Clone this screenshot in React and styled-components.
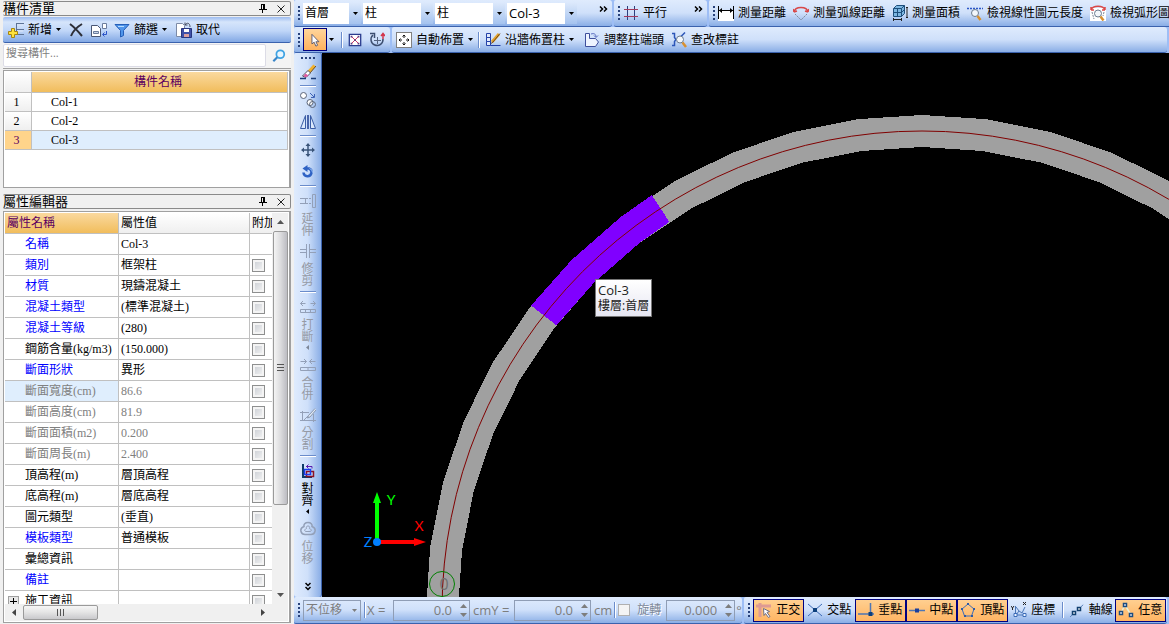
import React from 'react';
import styled, { createGlobalStyle, css } from 'styled-components';

const GlobalStyle = createGlobalStyle`
  *, *::before, *::after {
    box-sizing: border-box;
  }

  body {
    margin: 0;
    background-color: #f0f0f0;
    font-family: 'Open Sans', 'Noto Sans CJK TC', sans-serif;
    font-size: 12px;
    line-height: 16px;
    color: #000;
  }

  button, input, select {
    margin: 0;
    padding: 0;
    border: 0;
    background: none;
    border-radius: 0;
    font: inherit;
    color: inherit;
  }

  svg {
    display: block;
    flex: none;
  }
`;

const bar = 'linear-gradient(#dfebfd, #cfe0fa 50%, #8aaee6)';
const serif = "'Liberation Serif', 'Noto Sans CJK TC', serif";

const Shell = styled.div`
  display: flex;
  height: 100vh;
  overflow: hidden;
  white-space: nowrap;
`;

/* ---------- side panels ---------- */

const Sidebar = styled.aside`
  flex: none;
  width: 294px;
  padding: 1px 3px 1px 3px;
  display: flex;
  flex-direction: column;
  gap: 6px;
`;

const Panel = styled.section`
  width: 288px;
  display: flex;
  flex-direction: column;
  min-height: 0;
  flex: ${({ $grow }) => ($grow ? '1' : 'none')};
`;

const PanelTitle = styled.header`
  display: flex;
  align-items: center;
  height: 15px;
  border: 1px solid #8a8a8a;
  border-left: 0;
  border-radius: 2px;
  margin-bottom: 1px;
`;

const PanelName = styled.h2`
  flex: 1;
  margin: 0;
  font-size: 13px;
  font-weight: 400;
  line-height: 13px;
`;

const TitleButton = styled.button`
  width: 18px;
  height: 13px;
  display: flex;
  align-items: center;
  justify-content: center;
`;

const PanelToolbar = styled.div`
  display: flex;
  align-items: center;
  height: 26px;
  padding-left: 5px;
  border-bottom: 1px solid #3b62ad;
  border-radius: 2px;
  background: linear-gradient(#9dbcf0, #d6e5fb 20%, #c0d6f8 55%, #82a8e4);
`;

const PanelTool = styled.button`
  display: flex;
  align-items: center;
  gap: 4px;
  height: 22px;
  margin-right: ${({ $space }) => $space || 7}px;
`;

const SearchRow = styled.div`
  display: flex;
  align-items: center;
  height: 26px;
  background: #f4f4f4;
  border-bottom: 1px solid #a0a0a0;
`;

const SearchInput = styled.input`
  flex: 1;
  height: 23px;
  padding: 0 2px 7px;
  border: 1px solid #dcdce6;
  border-radius: 2px;
  background: #fff;
  font-size: 11px;

  &::placeholder {
    color: #808080;
    opacity: 1;
  }
`;

const SearchButton = styled.button`
  width: 25px;
  display: flex;
  justify-content: center;
`;

const Frame = styled.div`
  display: flex;
  flex-direction: column;
  flex: ${({ $grow }) => ($grow ? '1' : 'none')};
  min-height: ${({ $min }) => ($min ? `${$min}px` : '0')};
  border: 1px solid #a0a0a0;
  border-right-width: 2px;
  padding: 1px;
  margin-top: 1px;
  background: #fff;
  overflow: hidden;
`;

const ListTable = styled.table`
  width: 100%;
  table-layout: fixed;
  border-collapse: separate;
  border-spacing: 0;
  font-family: ${serif};
  font-size: 12px;
  line-height: 16px;
`;

const gold = 'linear-gradient(#fad99f, #f1bd5c)';
const silver = 'linear-gradient(#ffffff, #efefef)';

const ListHead = styled.th`
  height: 21px;
  padding: 0 3px 0 0;
  font-weight: 400;
  color: #5c0060;
  border-right: 1px solid #c0c0c0;
  border-bottom: 1px solid #c0c0c0;
  background: ${({ $gold }) => ($gold ? gold : silver)};
`;

const IndexCell = styled.th`
  height: 19px;
  padding: 0 3px 0 0;
  font-weight: 400;
  color: ${({ $active }) => ($active ? '#5c0060' : '#000')};
  background: ${({ $active }) => ($active ? '#ffd48b' : silver)};
  border-right: 1px solid #c0c0c0;
  border-bottom: 1px solid #c0c0c0;
`;

const NameCell = styled.td`
  padding: 0 0 0 19px;
  background: ${({ $active }) => ($active ? '#dfeefd' : '#fff')};
  border-right: 1px solid #c0c0c0;
  border-bottom: 1px solid #c0c0c0;
`;

const PropBody = styled.div`
  display: flex;
  flex: 1;
  min-height: 0;
`;

const PropScroll = styled.div`
  flex: 1;
  overflow: hidden;
`;

const PropTable = styled(ListTable)``;

const PropHead = styled.th`
  height: 21px;
  padding: 0 0 0 2px;
  text-align: left;
  font-weight: 400;
  overflow: hidden;
  color: ${({ $gold }) => ($gold ? '#5c0060' : '#000')};
  background: ${({ $gold }) => ($gold ? gold : silver)};
  border-right: 1px solid #c0c0c0;
  border-bottom: 1px solid #c0c0c0;

  &:last-child {
    border-right: 0;
  }
`;

const toneColor = { key: '#0000ff', plain: '#000', off: '#808080' };

const PropName = styled.th`
  height: 21px;
  padding: 0 0 0 ${({ $group }) => ($group ? 3 : 20)}px;
  text-align: left;
  font-weight: 400;
  color: ${({ $tone }) => toneColor[$tone]};
  background: ${({ $active }) => ($active ? '#dfeefd' : '#fff')};
  border-right: 1px solid #c0c0c0;
  border-bottom: 1px solid #c0c0c0;
`;

const PropValue = styled.td`
  padding: 0 0 0 2px;
  color: ${({ $tone }) => ($tone === 'off' ? '#808080' : '#000')};
  border-right: 1px solid #c0c0c0;
  border-bottom: 1px solid #c0c0c0;
`;

const PropCheck = styled.td`
  padding: 0 0 0 2px;
  border-bottom: 1px solid #c0c0c0;
`;

const GroupLabel = styled.span`
  display: flex;
  align-items: center;
  gap: 6px;
`;

const Expander = styled.button`
  width: 11px;
  height: 11px;
  display: flex;
  align-items: center;
  justify-content: center;
  border: 1px solid #a0a0a0;
  background: #e8e8e8;
`;

const CheckBox = styled.input.attrs({ type: 'checkbox' })`
  appearance: none;
  flex: none;
  display: block;
  width: ${({ $small }) => ($small ? 12 : 13)}px;
  height: ${({ $small }) => ($small ? 12 : 13)}px;
  border: 1px solid ${({ $small }) => ($small ? '#b0b0b0' : '#8e8f8f')};
  background: ${({ $small }) => ($small ? '#f4f4f4' : 'linear-gradient(135deg, #c8ccd2, #f6f6f6)')};
  box-shadow: inset 0 0 0 ${({ $small }) => ($small ? 1 : 2)}px #f4f4f4;
`;

const VScroll = styled.div`
  flex: none;
  width: 16px;
  display: flex;
  flex-direction: column;
  align-items: center;
  background: #f0f0f0;
`;

const HScroll = styled.div`
  flex: none;
  height: 17px;
  margin-right: 16px;
  display: flex;
  align-items: center;
  background: #f0f0f0;
`;

const ScrollRow = styled.div`
  background: #f0f0f0;
`;

const ScrollButton = styled.button`
  flex: none;
  width: 18px;
  height: 18px;
  display: flex;
  align-items: center;
  justify-content: center;
`;

const Thumb = styled.div`
  display: flex;
  align-items: center;
  justify-content: center;
  border: 1px solid #9a9a9a;
  border-radius: 2px;
  ${({ $across }) =>
    $across
      ? css`
          width: 75px;
          height: 15px;
          background: linear-gradient(#f6f6f6, #e6e6e6 45%, #c9c9cc);
        `
      : css`
          width: 15px;
          flex: 0 1 274px;
          background: linear-gradient(90deg, #f4f4f4, #dcdcde 50%, #bcbcc2);
        `}
`;

const Spacer = styled.div`
  flex: 1;
`;

/* ---------- toolbars ---------- */

const Main = styled.main`
  flex: 1;
  min-width: 0;
  display: flex;
  flex-direction: column;
  background: #9ebef5;
`;

const BarRow = styled.div`
  flex: none;
  display: flex;
  height: ${({ $height }) => $height}px;
  overflow: hidden;
`;

const Band = styled.div`
  display: flex;
  align-items: center;
  flex: ${({ $basis }) => ($basis ? `0 0 ${$basis}px` : '1 0 auto')};
  padding-left: 4px;
  margin-right: 2px;
  border-bottom: 1px solid #3b62ad;
  border-radius: 2px 3px 3px 2px;
  background: ${bar};
`;

const Grip = styled.span`
  flex: none;
  width: 2px;
  height: 14px;
  margin-right: 3px;
  background: repeating-linear-gradient(#27417a 0 2px, transparent 2px 4px);
`;

const Divider = styled.span`
  flex: none;
  width: 2px;
  height: 16px;
  margin: 0 ${({ $space }) => $space || 5}px;
  background: linear-gradient(90deg, #6a8ccb 50%, #fff 50%);
`;

const Tool = styled.button`
  flex: none;
  display: flex;
  align-items: center;
  justify-content: center;
  gap: 4px;
  height: 23px;
  margin-right: ${({ $space }) => $space || 0}px;
  padding: 0 ${({ $pad }) => $pad || 0}px;
`;

const SnapTool = styled(Tool)`
  width: 51px;
  border: 1px solid transparent;
  ${({ $on }) =>
    $on &&
    css`
      border-color: #000080;
      background: linear-gradient(#ffcf90, #ffb563);
    `}
`;

const PickTool = styled(Tool)`
  width: 24px;
  border: 1px solid #000080;
  background: linear-gradient(#ffd59b, #ffb25e);
`;

const More = styled.button`
  height: 18px;
  margin: 0 4px 8px auto;
`;

const ComboBox = styled.span`
  flex: none;
  display: grid;
  width: ${({ $width }) => $width}px;
  height: 21px;
  margin-right: 2px;
  background: ${({ $off }) => ($off ? 'transparent' : '#fff')};
  border: ${({ $off }) => ($off ? '1px solid #8f9db5' : '0')};
  color: ${({ $off }) => ($off ? '#7d7d7d' : '#000')};
`;

const ComboSelect = styled.select`
  grid-area: 1 / 1;
  appearance: none;
  padding: 0 14px 0 2px;
  font-size: ${({ $size }) => $size || 12}px;
  line-height: 18px;
  opacity: 1;
`;

const ComboArrow = styled.span`
  grid-area: 1 / 1;
  justify-self: end;
  width: 12px;
  display: flex;
  align-items: center;
  justify-content: center;
  pointer-events: none;
  background: ${({ $off }) => ($off ? 'none' : 'linear-gradient(#dbe8fb, #a5c3ef)')};
`;

const Work = styled.div`
  flex: 1;
  min-height: 0;
  display: flex;
`;

const SideBar = styled.div`
  flex: none;
  width: 28px;
  display: flex;
  flex-direction: column;
  align-items: center;
  border-right: 1px solid #3b62ad;
  border-radius: 2px 2px 3px 3px;
  background: linear-gradient(90deg, #dfebfd, #cfe0fa 50%, #8aaee6);
`;

const SideGrip = styled.span`
  flex: none;
  width: 14px;
  height: 2px;
  margin: 4px 0 2px;
  background: repeating-linear-gradient(90deg, #27417a 0 2px, transparent 2px 4px);
`;

const SideDivider = styled.span`
  flex: none;
  width: 16px;
  height: 2px;
  margin: 2px 0;
  background: linear-gradient(#6a8ccb 50%, #fff 50%);
`;

const SideIcon = styled.button`
  flex: none;
  height: 22px;
  display: flex;
  align-items: center;
`;

const SideTool = styled.button`
  flex: none;
  height: ${({ $menu }) => ($menu ? 58 : 50)}px;
  display: flex;
  flex-direction: column;
  align-items: center;
  color: ${({ disabled }) => (disabled ? '#959aa5' : '#000')};
`;

const SideGlyph = styled.span`
  height: 24px;
  display: flex;
  align-items: center;
`;

const SideLabel = styled.span`
  width: 12px;
  line-height: 12px;
  white-space: normal;
  word-break: break-all;
`;

const SideMenuMark = styled.span`
  height: 8px;
  display: flex;
  align-items: center;
`;

/* ---------- drawing area ---------- */

const Canvas = styled.div`
  position: relative;
  flex: 1;
  min-width: 0;
  background: #000;
  overflow: hidden;
`;

const Scene = styled.svg`
  width: 100%;
  height: 100%;
`;

const Tip = styled.div`
  position: absolute;
  left: 273px;
  top: 226px;
  padding: 2px;
  border: 1px solid #767676;
  background: linear-gradient(#fff, #e6e6f2);
  color: #222;
`;

const TipName = styled.div`
  font-size: 13px;
`;

/* ---------- status bar ---------- */

const Field = styled.label`
  flex: none;
  display: flex;
  align-items: center;
  font-size: 13px;
  color: #7d7d7d;
`;

const FieldText = styled.span`
  width: ${({ $width }) => $width}px;
`;

const SpinBox = styled.span`
  display: flex;
  width: ${({ $width }) => $width}px;
  height: 21px;
  margin-right: ${({ $tight }) => ($tight ? 1 : 3)}px;
  border: 1px solid #8f9db5;
`;

const SpinInput = styled.input`
  flex: 1;
  min-width: 0;
  padding-right: 5px;
  text-align: right;
  color: #7d7d7d;
`;

const SpinArrows = styled.span`
  width: 12px;
  display: flex;
  flex-direction: column;
  align-items: center;
  justify-content: space-between;
  padding: 3px 0;
`;

const RotateText = styled.label`
  margin: 0 5px 0 7px;
  font-size: 12px;
  color: #7d8798;
  text-shadow: 1px 1px 0 #fff;
`;

/* ---------- icons ---------- */

const Icon = ({ size = 16, children }) => (
  <svg width={size} height={size} viewBox="0 0 16 16" fill="none" stroke="#2c4f8c" aria-hidden="true">
    {children}
  </svg>
);

const Caret = ({ color = '#000' }) => (
  <svg width="5" height="3" viewBox="0 0 5 3" fill={color} aria-hidden="true">
    <path d="M0 0h5L2.5 3z" />
  </svg>
);

const ArrowUp = ({ color = '#555' }) => (
  <svg width="7" height="4" viewBox="0 0 7 4" fill={color} aria-hidden="true">
    <path d="M0 4L3.5 0 7 4z" />
  </svg>
);

const ArrowDown = ({ color = '#555' }) => (
  <svg width="7" height="4" viewBox="0 0 7 4" fill={color} aria-hidden="true">
    <path d="M0 0L3.5 4 7 0z" />
  </svg>
);

const ArrowLeft = () => (
  <svg width="4" height="7" viewBox="0 0 4 7" fill="#444" aria-hidden="true">
    <path d="M4 0L0 3.5 4 7z" />
  </svg>
);

const ArrowRight = () => (
  <svg width="4" height="7" viewBox="0 0 4 7" fill="#444" aria-hidden="true">
    <path d="M0 0l4 3.5L0 7z" />
  </svg>
);

const ArrowLeftSmall = ({ dark }) => (
  <svg width="3" height="5" viewBox="0 0 3 5" fill={dark ? '#000' : '#7d8798'} aria-hidden="true">
    <path d="M3 0v5L0 2.5z" />
  </svg>
);

const Chevrons = () => (
  <svg width="9" height="6" viewBox="0 0 9 6" fill="none" stroke="#000" strokeWidth="1.5" aria-hidden="true">
    <path d="M1 0.5L3.5 3 1 5.5M5 0.5L7.5 3 5 5.5" />
  </svg>
);

const ChevronsDown = () => (
  <svg width="6" height="9" viewBox="0 0 6 9" fill="none" stroke="#000" strokeWidth="1.5" aria-hidden="true">
    <path d="M0.5 1L3 3.5 5.5 1M0.5 5L3 7.5 5.5 5" />
  </svg>
);

const PinIcon = () => (
  <svg width="8" height="9" viewBox="0 0 8 9" stroke="#000" fill="none" shapeRendering="crispEdges" aria-hidden="true">
    <path d="M2.5 5V0.5h3V5M4.5 1v4M0 5.5h8M3.5 6v3" />
  </svg>
);

const CloseIcon = () => (
  <svg width="8" height="8" viewBox="0 0 8 8" stroke="#222" aria-hidden="true">
    <path d="M0.5 0.5l7 7M7.5 0.5l-7 7" />
  </svg>
);

const AddIcon = () => (
  <Icon>
    <path d="M8 1.5h8M8 7.5h8M8 12.5h8M8.5 1v11" stroke="#5d7396" />
    <path d="M9 3h6M9 9h6" stroke="#dce7f8" />
    <path d="M3.5 6.5h3v3h3v3h-3v3h-3v-3h-3v-3h3z" fill="#ffe23c" stroke="#a88610" />
  </Icon>
);

const DeleteIcon = () => (
  <Icon>
    <path d="M2 2c4 3 7 6 12 12M14 2C9 5 5 9 3 14" stroke="#2d2f38" strokeWidth="2" />
  </Icon>
);

const CopyIcon = () => (
  <Icon>
    <path d="M0.5 3.5h6l3 3v8h-9z" fill="#fff" stroke="#4a5774" />
    <path d="M2.5 9.5h5v2h-5z" fill="#c9d6ea" stroke="#6b7c9c" />
    <path d="M11.5 1.5h4v5h-4z" fill="#fff" stroke="#6b7c9c" />
    <path d="M15.5 9v3.5H12M13.5 10.5l-2 2 2 2" stroke="#2c54c8" />
  </Icon>
);

const FilterIcon = () => (
  <Icon>
    <path d="M1 2.5h14L9.5 8.5v5l-3 1.5V8.5z" fill="#4f95ea" stroke="#245eb8" />
    <path d="M4 4.5h6" stroke="#b9dcff" />
  </Icon>
);

const ReplaceIcon = () => (
  <Icon>
    <path d="M0.5 1.5h6l2 2v11h-8z" fill="#fff" stroke="#7c8aa6" />
    <path d="M5.5 6.5h10v9h-10z" fill="#3e50a8" stroke="#27357e" />
    <path d="M8 7h5v3H8z" fill="#fff" stroke="none" />
    <path d="M8 12h5v3H8z" fill="#d9a0a0" stroke="none" />
    <path d="M9 3c2-3 5-2 5 2M9 0.5V3h2.5" stroke="#444b5e" />
  </Icon>
);

const SearchIcon = () => (
  <Icon size={14}>
    <circle cx="9.5" cy="6" r="4.5" stroke="#3fa3e3" strokeWidth="2" fill="#e8f6ff" />
    <path d="M6 9.5L1.5 14" stroke="#3a86c8" strokeWidth="2.5" />
  </Icon>
);

const CursorIcon = () => (
  <Icon size={14}>
    <path d="M4.5 1.5v11l2.5-2 2 4.5 2-1-2-4h3.5z" fill="#fff" stroke="#50506a" />
  </Icon>
);

const BoxCrossIcon = () => (
  <Icon size={14}>
    <path d="M1.5 1.5h13v13h-13z" fill="#fff" stroke="#2b3d8f" strokeWidth="1.5" />
    <path d="M4 4l8 8M12 4l-8 8" stroke="#d02050" />
    <path d="M7 7h2v2H7zM3 3h2v2H3zM11 3h2v2h-2zM3 11h2v2H3zM11 11h2v2h-2z" fill="#5a3a80" stroke="none" />
  </Icon>
);

const RotatePointIcon = () => (
  <Icon>
    <path d="M4 3a6 6 0 1 0 10 4" stroke="#3c4e70" strokeWidth="1.5" />
    <path d="M1 1.5h4.5V6" stroke="#3c4e70" strokeWidth="1.5" />
    <path d="M8.5 5v7M5 8.5h7" stroke="#54637f" />
    <path d="M14 2v5M12 4l2-2.5L16 4" stroke="#d3344b" strokeWidth="1.5" />
  </Icon>
);

const AutoPlaceIcon = () => (
  <Icon>
    <path d="M0 0h16v16H0z" fill="#fff" stroke="none" />
    <path d="M0.5 0.5h15v15h-15z" stroke="#000" strokeDasharray="1 1" />
    <path d="M8 3v3M8 10v3M3 8h3M10 8h3M6.5 4.5L8 3l1.5 1.5M6.5 11.5L8 13l1.5-1.5M4.5 6.5L3 8l1.5 1.5M11.5 6.5L13 8l-1.5 1.5" stroke="#111" />
  </Icon>
);

const WallColumnIcon = () => (
  <Icon>
    <path d="M1.5 1.5h4v4h-4zM1.5 5.5h4v4h-4zM1.5 9.5h4v4h-4zM5.5 13.5h10" stroke="#2341a8" fill="#dfe9fb" />
    <path d="M14 2L7 10" stroke="#e5a32e" strokeWidth="3" />
    <path d="M15 1.5L8 10l-2 1.5" stroke="#6f4a1a" />
  </Icon>
);

const ColumnEndIcon = () => (
  <Icon>
    <path d="M1.5 1.5h4v5h6l3 3.5-3 4.5h-10z" fill="#eef4ff" stroke="#3e4f9c" />
    <path d="M7 2c3-1 5 0 5 3M10 3.5l2 2 2-2" stroke="#5b6ec0" />
  </Icon>
);

const AnnotateIcon = () => (
  <Icon>
    <path d="M1 1.5h2.5v4L5 7.5l-1.5 2v4H1M14 0.5l-4 4" stroke="#2c56b8" strokeWidth="1.5" />
    <circle cx="9" cy="7.5" r="3.5" fill="#f3f7fb" stroke="#6c7c90" />
    <path d="M11.5 10.5l3.5 4.5" stroke="#d9902f" strokeWidth="2.5" />
  </Icon>
);

const GridIcon = () => (
  <Icon>
    <path d="M4.5 1v14M11.5 1v14" stroke="#2e3f7c" />
    <path d="M1 4.5h14M1 11.5h14" stroke="#a33a5c" />
  </Icon>
);

const DistanceIcon = () => (
  <Icon>
    <path d="M0 5h16v11H0z" fill="#fff" stroke="none" />
    <path d="M0.5 1v13M15.5 1v13M1 5.5h14" stroke="#000" />
    <path d="M1 5.5l3-2.5v5zM15 5.5L12 3v5z" fill="#000" stroke="none" />
  </Icon>
);

const ArcDistanceIcon = () => (
  <Icon>
    <path d="M1 7C2 1 14 1 15 7M1 7L0 4M1 7l3-1M15 7l1-3M15 7l-3-1" stroke="#d94848" strokeWidth="1.5" />
    <path d="M2 9l6 6 6-6" stroke="#7e8797" strokeDasharray="2 1" />
  </Icon>
);

const AreaIcon = () => (
  <Icon>
    <path d="M1.5 3.5l3-3h8v8l-3 3h-8z" fill="#7db7e2" stroke="#1d4f7c" />
    <path d="M1.5 3.5h8v8M9.5 3.5l3-3M5.5 3.5v8M1.5 7.5h8l3-3" stroke="#1d4f7c" />
    <path d="M1 14.5h9M1.5 13v3M9.5 13v3M15 2v11M14 2.5h2M14 12.5h2" stroke="#222" />
  </Icon>
);

const LineViewIcon = () => (
  <Icon>
    <path d="M0 3.5h16" stroke="#2c57c8" strokeWidth="1.5" strokeDasharray="2 1" />
    <circle cx="8" cy="8" r="3.5" fill="#f3f7fb" stroke="#6c7c90" />
    <path d="M10.5 11l3 4" stroke="#d9902f" strokeWidth="2.5" />
  </Icon>
);

const ArcViewIcon = () => (
  <Icon>
    <path d="M0 3h16v13H0z" fill="#fff" stroke="none" />
    <path d="M1 5C3 0 13 0 15 5M1 5V2M1 5h3M15 5V2M15 5h-3" stroke="#d94848" strokeWidth="1.5" />
    <path d="M2 7l2 7M14 7l-1 4" stroke="#7e8797" strokeDasharray="2 1" />
    <circle cx="8" cy="8.5" r="3.5" fill="#f3f7fb" stroke="#6c7c90" />
    <path d="M10.5 11.5l3 4" stroke="#d9902f" strokeWidth="2.5" />
  </Icon>
);

const BrushIcon = () => (
  <Icon>
    <path d="M14.5 1.5L8.5 8" stroke="#f0b02c" strokeWidth="3" />
    <path d="M16 2L10 9" stroke="#6e4b17" />
    <path d="M8 6.5l2.5 2.5-4.5 4.5-3.500-1.500z" fill="#fff" stroke="#4f4f60" />
    <path d="M5.500 9.500l3 2-3 2-2-1.500z" fill="#df5aa0" stroke="none" />
    <path d="M0 14.5h6M11 14.5h5" stroke="#1b3d7a" strokeWidth="1.5" />
  </Icon>
);

const DuplicateIcon = () => (
  <Icon>
    <circle cx="3.5" cy="3.5" r="3" fill="#fff" stroke="#5a6478" />
    <circle cx="10" cy="10.5" r="3" fill="#fff" stroke="#5a6478" />
    <circle cx="12.5" cy="12.5" r="3" fill="none" stroke="#5a6478" />
    <path d="M10 1l4 4M14.5 2v3.500H11" stroke="#3d62b6" />
  </Icon>
);

const MirrorIcon = () => (
  <Icon>
    <path d="M5.5 1.5v13h-5zM10.5 1.5v13h5z" fill="#dbe8fb" stroke="#3a5da6" />
    <path d="M8 1v14" stroke="#1c3d8f" strokeWidth="1.5" />
  </Icon>
);

const MoveIcon = () => (
  <Icon>
    <path d="M8 2v12M2 8h12" stroke="#3a5479" strokeWidth="1.5" />
    <path d="M5.500 4L8 1l2.500 3zM5.500 12L8 15l2.500-3zM4 5.500L1 8l3 2.500zM12 5.500L15 8l-3 2.500z" fill="#3a5479" stroke="none" />
  </Icon>
);

const RotateIcon = () => (
  <Icon>
    <path d="M6 4.500h3a4 4 0 1 1-5.500 4" stroke="#2f62c4" strokeWidth="2.500" />
    <path d="M7.500 1v7l-5-3.500z" fill="#2f62c4" stroke="none" />
    <path d="M9.500 4.500a4 4 0 0 1 3 4" stroke="#9cc2f5" />
  </Icon>
);

const faded = '#93a0b8';

const ExtendIcon = () => (
  <Icon>
    <path d="M12.5 1.5h3v13h-3zM0 5.5h8M0 10.5h8M9 5.5h2M9 10.5h2M5.5 5v6" stroke={faded} />
  </Icon>
);

const TrimIcon = () => (
  <Icon>
    <path d="M6.5 1v14M9.5 1v14M0 6.5h6M0 9.5h6M10 6.5h6M10 9.5h6" stroke={faded} />
  </Icon>
);

const BreakIcon = () => (
  <Icon>
    <path d="M0.5 4.5h5M3 2L0.5 4.5 3 7M10.5 4.5h5M13 2l2.5 2.5L13 7M0.5 10.5h15v3H0.5zM5.5 10v4M10.5 10v4" stroke={faded} />
  </Icon>
);

const MergeIcon = () => (
  <Icon>
    <path d="M0.5 4.5h6M4 2l2.5 2.5L4 7M9.5 4.5h6M12 2L9.5 4.5 12 7M0.5 10.5h15v3H0.5zM8 10v4" stroke={faded} />
  </Icon>
);

const SplitIcon = () => (
  <Icon>
    <path d="M0 5.5h9M2.5 4v10M0 13.5h16M13.5 7v8M4 13L9 8" stroke={faded} />
    <path d="M15 1.5L8.5 8.5l-1 2.5 2.5-1L16 3" fill="#dfe8f5" stroke="#8a97ad" />
  </Icon>
);

const AlignIcon = () => (
  <Icon>
    <path d="M2 1h2v12h8v2H2z" fill="#0c3a66" stroke="none" />
    <path d="M6.5 8.5h7v5h-7z" stroke="#8c1124" strokeWidth="1.5" />
    <path d="M4.5 6.5h6v5h-6z" stroke="#1a3cf0" strokeWidth="1.5" />
    <path d="M6 3.5h6v2M8.500 1.500l-2 2 2 2" stroke="#5a1cae" />
  </Icon>
);

const OffsetIcon = () => (
  <Icon>
    <path d="M8 1.5c3 0 4.5 2 4 4 3 1 3.5 3 3 5s-2 3-4 3H5c-2 0-3.5-1-4-3s0-4 3-5c-0.5-2 1-4 4-4z" stroke={faded} strokeWidth="1.5" />
    <path d="M8 5c1.5 0 2 1 1.5 2.5 2 0.5 2.5 3 0.5 3H6c-2 0-1.5-2.5 0.5-3C6 6 6.5 5 8 5z" stroke={faded} />
  </Icon>
);

const OrthoIcon = () => (
  <Icon>
    <path d="M0 4h15M4 1v14" stroke="#dd9a94" strokeWidth="3" />
    <path d="M7.5 6.5l6 3-2.5 1 3 4-1.5 1-3-4-1.5 2z" fill="#fff" stroke="#6d6d86" />
  </Icon>
);

const CrossIcon = () => (
  <Icon>
    <path d="M1 2l14 12M15 2L1 14" stroke="#3d6cb8" />
    <path d="M6 6h4v4H6z" fill="#0d3f7c" stroke="none" />
  </Icon>
);

const PerpIcon = () => (
  <Icon>
    <path d="M0 12h16M12.5 1v11" stroke="#4e76b4" strokeWidth="1.5" />
    <path d="M10.5 10h4v4h-4z" fill="#0d3f7c" stroke="none" />
  </Icon>
);

const MidIcon = () => (
  <Icon>
    <path d="M0 8.5h16" stroke="#4e76b4" strokeWidth="1.5" />
    <path d="M6 6.5h4v4H6z" fill="#1b3f9c" stroke="none" />
  </Icon>
);

const VertexIcon = () => (
  <Icon>
    <path d="M8 2l6 5-2.5 7h-7L2 7z" stroke="#3d6cb8" />
    <path d="M7 1h2v2H7zM1 6h2v2H1zM13 6h2v2h-2zM4 13h2v2H4zM11 13h2v2h-2z" fill="#2c5aa6" stroke="none" />
  </Icon>
);

const CoordIcon = () => (
  <Icon>
    <path d="M4.5 4v9h9M5 5l3 4 3 2 3-6M8 9l-3 4" stroke="#4a76b8" />
    <path d="M0 4l1.5 2L3 4M1.5 6v2M12 0l3 3M15 0l-3 3" stroke="#222" />
    <path d="M3 11.5h3v3H3zM12 11.5h3v3h-3z" fill="#eef5ff" stroke="#3d6cb8" />
  </Icon>
);

const AxisIcon = () => (
  <Icon>
    <path d="M1 15L15 2" stroke="#5b83be" strokeDasharray="3 2" />
    <path d="M3.5 9.5h3v3h-3zM8.5 5.5h3v3h-3z" fill="#fff" stroke="#12406f" strokeWidth="1.5" />
  </Icon>
);

const AnyIcon = () => (
  <Icon>
    <path d="M3 11l4-8 6 10" stroke="#e8f0d8" strokeWidth="1.5" />
    <path d="M5.5 1.5h3v3h-3zM1.5 9.5h3v3h-3zM11.5 11.5h3v3h-3z" fill="#fff" stroke="#1c4c80" strokeWidth="1.5" />
  </Icon>
);

/* ---------- data ---------- */

const columns = ['Col-1', 'Col-2', 'Col-3'];

const properties = [
  { name: '名稱', value: 'Col-3', tone: 'key', noCheck: true },
  { name: '類別', value: '框架柱', tone: 'key' },
  { name: '材質', value: '現鑄混凝土', tone: 'key' },
  { name: '混凝土類型', value: '(標準混凝土)', tone: 'key' },
  { name: '混凝土等級', value: '(280)', tone: 'key' },
  { name: '鋼筋含量(kg/m3)', value: '(150.000)', tone: 'plain' },
  { name: '斷面形狀', value: '異形', tone: 'key' },
  { name: '斷面寬度(cm)', value: '86.6', tone: 'off', active: true },
  { name: '斷面高度(cm)', value: '81.9', tone: 'off' },
  { name: '斷面面積(m2)', value: '0.200', tone: 'off' },
  { name: '斷面周長(m)', value: '2.400', tone: 'off' },
  { name: '頂高程(m)', value: '層頂高程', tone: 'plain' },
  { name: '底高程(m)', value: '層底高程', tone: 'plain' },
  { name: '圖元類型', value: '(垂直)', tone: 'plain' },
  { name: '模板類型', value: '普通模板', tone: 'key' },
  { name: '彙總資訊', value: '', tone: 'plain' },
  { name: '備註', value: '', tone: 'key' },
  { name: '施工資訊', value: '', tone: 'plain', group: true },
];

const combos = [
  { label: '樓層', value: '首層', width: 58 },
  { label: '構件分類', value: '柱', width: 70 },
  { label: '構件類型', value: '柱', width: 70 },
  { label: '構件', value: 'Col-3', width: 70, size: 13 },
];

const measureTools = [
  { label: '測量距離', icon: DistanceIcon },
  { label: '測量弧線距離', icon: ArcDistanceIcon },
  { label: '測量面積', icon: AreaIcon },
  { label: '檢視線性圖元長度', icon: LineViewIcon },
  { label: '檢視弧形圖元長度', icon: ArcViewIcon },
];

const snapTools = [
  { label: '正交', icon: OrthoIcon, on: true },
  { label: '交點', icon: CrossIcon },
  { label: '垂點', icon: PerpIcon, on: true },
  { label: '中點', icon: MidIcon, on: true },
  { label: '頂點', icon: VertexIcon, on: true },
  { label: '座標', icon: CoordIcon },
];

// The wall ring is a 48-sided polygon around this centre.
const ring = { x: 600, y: 558, outer: 496, inner: 464, axis: 480 };
const STEP = 7.5;

const pointAt = (radius, deg) => {
  const a = (deg * Math.PI) / 180;
  return `${(ring.x - radius * Math.sin(a)).toFixed(1)},${(ring.y - radius * Math.cos(a)).toFixed(1)}`;
};

const ringSegment = (from, to) => {
  const stops = [from];
  for (let d = Math.floor(from / STEP) * STEP + STEP; d < to; d += STEP) stops.push(d);
  stops.push(to);
  return [
    ...stops.map((d) => pointAt(ring.outer, d)),
    ...stops.reverse().map((d) => pointAt(ring.inner, d)),
  ].join(' ');
};

/* ---------- pieces ---------- */

const Title = ({ children }) => (
  <PanelTitle>
    <PanelName>{children}</PanelName>
    <TitleButton aria-label="固定"><PinIcon /></TitleButton>
    <TitleButton aria-label="關閉"><CloseIcon /></TitleButton>
  </PanelTitle>
);

const Combo = ({ label, value, width, size, off }) => (
  <ComboBox $width={width} $off={off}>
    <ComboSelect aria-label={label} defaultValue={value} disabled={off} $size={size}>
      <option>{value}</option>
    </ComboSelect>
    <ComboArrow $off={off}><Caret color={off ? '#7d7d7d' : '#000'} /></ComboArrow>
  </ComboBox>
);

const Spin = ({ label, value, width, tight }) => (
  <SpinBox $width={width} $tight={tight}>
    <SpinInput aria-label={label} defaultValue={value} disabled />
    <SpinArrows>
      <ArrowUp color="#7d7d7d" />
      <ArrowDown color="#7d7d7d" />
    </SpinArrows>
  </SpinBox>
);

const VerticalTool = ({ icon: Glyph, label, menu, enabled }) => (
  <SideTool $menu={menu} disabled={!enabled}>
    <SideGlyph><Glyph /></SideGlyph>
    <SideLabel>{label}</SideLabel>
    {menu && <SideMenuMark><ArrowLeftSmall dark={enabled} /></SideMenuMark>}
  </SideTool>
);

const ComponentList = () => (
  <Panel>
    <Title>構件清單</Title>
    <PanelToolbar>
      <PanelTool><AddIcon />新增<Caret /></PanelTool>
      <PanelTool aria-label="刪除"><DeleteIcon /></PanelTool>
      <PanelTool aria-label="複製"><CopyIcon /></PanelTool>
      <PanelTool $space={9}><FilterIcon />篩選<Caret /></PanelTool>
      <PanelTool><ReplaceIcon />取代</PanelTool>
    </PanelToolbar>
    <SearchRow>
      <SearchInput aria-label="搜尋構件" placeholder="搜尋構件..." />
      <SearchButton aria-label="搜尋"><SearchIcon /></SearchButton>
    </SearchRow>
    <Frame $min={118}>
      <ListTable>
        <colgroup>
          <col width="27" />
          <col />
        </colgroup>
        <thead>
          <tr>
            <ListHead />
            <ListHead $gold>構件名稱</ListHead>
          </tr>
        </thead>
        <tbody>
          {columns.map((name, i) => (
            <tr key={name}>
              <IndexCell $active={i === 2}>{i + 1}</IndexCell>
              <NameCell $active={i === 2}>{name}</NameCell>
            </tr>
          ))}
        </tbody>
      </ListTable>
    </Frame>
  </Panel>
);

const PropertyEditor = () => (
  <Panel $grow>
    <Title>屬性編輯器</Title>
    <Frame $grow>
      <PropBody>
        <PropScroll>
          <PropTable>
            <colgroup>
              <col width="114" />
              <col width="131" />
              <col />
            </colgroup>
            <thead>
              <tr>
                <PropHead $gold>屬性名稱</PropHead>
                <PropHead>屬性值</PropHead>
                <PropHead>附加</PropHead>
              </tr>
            </thead>
            <tbody>
              {properties.map((p) => (
                <tr key={p.name}>
                  <PropName $tone={p.tone} $active={p.active} $group={p.group}>
                    {p.group ? (
                      <GroupLabel>
                        <Expander aria-label="展開">
                          <svg width="7" height="7" viewBox="0 0 7 7" stroke="#000"><path d="M0 3.5h7M3.5 0v7" /></svg>
                        </Expander>
                        {p.name}
                      </GroupLabel>
                    ) : (
                      p.name
                    )}
                  </PropName>
                  <PropValue $tone={p.tone}>{p.value}</PropValue>
                  <PropCheck>{!p.noCheck && <CheckBox aria-label={`附加 ${p.name}`} />}</PropCheck>
                </tr>
              ))}
            </tbody>
          </PropTable>
        </PropScroll>
        <VScroll>
          <ScrollButton aria-label="向上"><ArrowUp /></ScrollButton>
          <Thumb>
            <svg width="7" height="8" viewBox="0 0 7 8" stroke="#555"><path d="M0 0.5h7M0 3.5h7M0 6.5h7" /></svg>
          </Thumb>
          <Spacer />
          <ScrollButton aria-label="向下"><ArrowDown /></ScrollButton>
        </VScroll>
      </PropBody>
      <ScrollRow>
        <HScroll>
          <ScrollButton aria-label="向左"><ArrowLeft /></ScrollButton>
          <Thumb $across>
            <svg width="8" height="7" viewBox="0 0 8 7" stroke="#555"><path d="M0.5 0v7M3.5 0v7M6.5 0v7" /></svg>
          </Thumb>
          <Spacer />
          <ScrollButton aria-label="向右"><ArrowRight /></ScrollButton>
        </HScroll>
      </ScrollRow>
    </Frame>
  </Panel>
);

const TopBars = () => (
  <>
    <BarRow $height={27}>
      <Band $basis={318}>
        <Grip />
        {combos.map((c) => <Combo key={c.label} {...c} />)}
        <More aria-label="更多"><Chevrons /></More>
      </Band>
      <Band $basis={93}>
        <Grip />
        <Tool><GridIcon />平行</Tool>
        <More aria-label="更多"><Chevrons /></More>
      </Band>
      <Band>
        <Grip />
        {measureTools.map(({ label, icon: Glyph }) => (
          <Tool key={label} $space={7}><Glyph />{label}</Tool>
        ))}
      </Band>
    </BarRow>
    <BarRow $height={26}>
      <Band $basis={96}>
        <Grip />
        <PickTool aria-label="選擇" $space={2}><CursorIcon /></PickTool>
        <Tool aria-label="選擇方式" $space={2}><Caret /></Tool>
        <Divider />
        <Tool aria-label="點" $space={7}><BoxCrossIcon /></Tool>
        <Tool aria-label="旋轉點"><RotatePointIcon /></Tool>
      </Band>
      <Band>
        <Tool><AutoPlaceIcon />自動佈置<Caret /></Tool>
        <Divider />
        <Tool $space={10}><WallColumnIcon />沿牆佈置柱<Caret /></Tool>
        <Tool $space={7}><ColumnEndIcon />調整柱端頭</Tool>
        <Tool><AnnotateIcon />查改標註</Tool>
      </Band>
    </BarRow>
  </>
);

const EditBar = () => (
  <SideBar>
    <SideGrip />
    <SideIcon aria-label="格式刷"><BrushIcon /></SideIcon>
    <SideDivider />
    <SideIcon aria-label="複製圖元"><DuplicateIcon /></SideIcon>
    <SideIcon aria-label="鏡像"><MirrorIcon /></SideIcon>
    <SideDivider />
    <SideIcon aria-label="移動"><MoveIcon /></SideIcon>
    <SideIcon aria-label="旋轉圖元"><RotateIcon /></SideIcon>
    <SideDivider />
    <VerticalTool icon={ExtendIcon} label="延伸" />
    <VerticalTool icon={TrimIcon} label="修剪" />
    <SideDivider />
    <VerticalTool icon={BreakIcon} label="打斷" menu />
    <VerticalTool icon={MergeIcon} label="合併" />
    <VerticalTool icon={SplitIcon} label="分割" />
    <SideDivider />
    <VerticalTool icon={AlignIcon} label="對齊" menu enabled />
    <VerticalTool icon={OffsetIcon} label="位移" />
    <Spacer />
    <SideIcon aria-label="更多"><ChevronsDown /></SideIcon>
  </SideBar>
);

const Drawing = () => (
  <Canvas>
    <Scene>
      <g shapeRendering="crispEdges">
        <polygon points={ringSegment(-90, 90)} fill="#a0a0a0" />
        <polygon points={ringSegment(33, 52)} fill="#8000ff" />
      </g>
      <circle cx={ring.x} cy={ring.y} r={ring.axis} fill="none" stroke="#800000" />
      <circle cx="120" cy="531" r="12.5" fill="none" stroke="#008000" />
      <text x="122" y="537" textAnchor="middle" fontSize="16" fill="#707070">0</text>
      <path d="M55 489V448" stroke="#00ff00" strokeWidth="4" />
      <path d="M51 450l4-11 4 11z" fill="#00ff00" />
      <path d="M55 489h38" stroke="#ff0000" strokeWidth="4" />
      <path d="M92 485l12 4-12 4z" fill="#ff0000" />
      <circle cx="55" cy="489" r="4" fill="#0080ff" />
      <g fontFamily="Lato" fontSize="14" textAnchor="middle">
        <text x="69" y="452" fill="#00ff00">Y</text>
        <text x="97" y="478" fill="#ff0000">X</text>
        <text x="46" y="494" fill="#0080ff">Z</text>
      </g>
    </Scene>
    <Tip role="tooltip">
      <TipName>Col-3</TipName>
      <div>樓層:首層</div>
    </Tip>
  </Canvas>
);

const StatusBar = () => (
  <BarRow $height={27}>
    <Band $basis={447}>
      <Grip />
      <Combo label="位移方式" value="不位移" width={58} off />
      <Divider $space={1} />
      <Field><FieldText $width={26}>X =</FieldText><Spin value="0.0" width={77} /></Field>
      <Field><FieldText $width={41}>cmY =</FieldText><Spin value="0.0" width={77} /></Field>
      <Field>cm</Field>
      <Divider $space={2} />
      <CheckBox $small id="rotate" disabled />
      <RotateText htmlFor="rotate">旋轉</RotateText>
      <Field><Spin label="旋轉角度" value="0.000" width={69} tight />°</Field>
    </Band>
    <Band>
      <Grip />
      {snapTools.map(({ label, icon: Glyph, on }) => (
        <SnapTool key={label} $on={on}><Glyph />{label}</SnapTool>
      ))}
      <Divider $space={3} />
      <Tool $pad={2}><AxisIcon />軸線</Tool>
      <SnapTool $on><AnyIcon />任意</SnapTool>
    </Band>
  </BarRow>
);

const App = () => (
  <Shell>
    <GlobalStyle />
    <Sidebar>
      <ComponentList />
      <PropertyEditor />
    </Sidebar>
    <Main>
      <TopBars />
      <Work>
        <EditBar />
        <Drawing />
      </Work>
      <StatusBar />
    </Main>
  </Shell>
);

export default App;
